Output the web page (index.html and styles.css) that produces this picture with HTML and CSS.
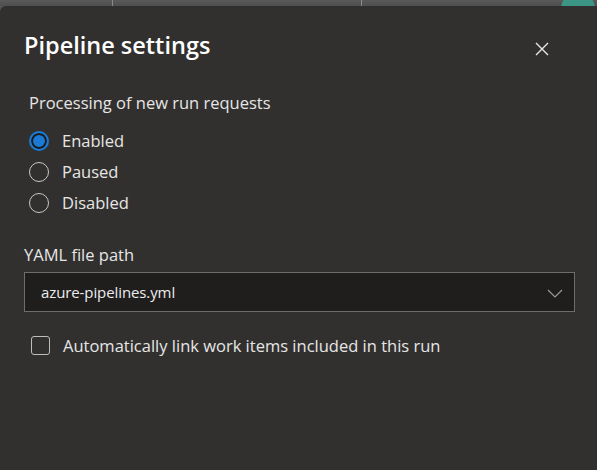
FILE: index.html
```html
<!DOCTYPE html>
<html>
<head>
<meta charset="utf-8">
<link rel="stylesheet" href="styles.css">
</head>
<body>
<div class="backdrop">
  <div class="topbar">
    <span class="divider d1"></span>
    <span class="divider d2"></span>
    <span class="avatar"></span>
  </div>
  <div class="panel">
    <div class="header">
      <h1 class="title">Pipeline settings</h1>
      <button class="close" aria-label="Close">
        <svg width="14" height="14" viewBox="0 0 14 14"><path d="M1 1 L13 13 M13 1 L1 13" stroke="#e8e8e8" stroke-width="1.4" fill="none"/></svg>
      </button>
    </div>
    <div class="group">
      <div class="group-label">Processing of new run requests</div>
      <div class="radios">
        <label class="radio"><span class="dot checked"></span><span>Enabled</span></label>
        <label class="radio"><span class="dot"></span><span>Paused</span></label>
        <label class="radio"><span class="dot"></span><span>Disabled</span></label>
      </div>
    </div>
    <div class="field">
      <div class="field-label">YAML file path</div>
      <div class="select">
        <span>azure-pipelines.yml</span>
        <svg class="chev" width="16" height="9" viewBox="0 0 16 9"><path d="M1 1 L8 8 L15 1" stroke="#9a9a9a" stroke-width="1.2" fill="none"/></svg>
      </div>
    </div>
    <label class="check"><span class="box"></span><span>Automatically link work items included in this run</span></label>
  </div>
</div>
</body>
</html>
```
FILE: styles.css
```css
* { box-sizing: border-box; }
html, body { margin: 0; padding: 0; }
body {
  width: 597px;
  height: 470px;
  overflow: hidden;
  background: #32302e;
  font-family: "Open Sans", "Noto Sans", sans-serif;
  color: #e6e6e6;
}
.backdrop {
  position: relative;
  height: 470px;
  display: flex;
  flex-direction: column;
  background: #555;
}
.topbar {
  height: 6px;
  background: linear-gradient(#5a5a5a, #4e4e4e);
  position: relative;
  overflow: hidden;
  flex: none;
}
.divider {
  position: absolute;
  top: 0;
  width: 1px;
  height: 6px;
  background: #8a8a8a;
}
.d1 { left: 112px; }
.d2 { left: 361px; }
.avatar {
  position: absolute;
  left: 561px;
  top: -8px;
  width: 34px;
  height: 34px;
  border-radius: 50%;
  background: #3c9686;
  z-index: 2;
}
.panel {
  flex: 1;
  background: #32302e;
  border-top-left-radius: 6px;
  padding: 0 22px 0 24px;
  position: relative;
}
.header {
  display: flex;
  justify-content: space-between;
  align-items: center;
  height: 80px;
  padding-bottom: 2px;
}
.title {
  margin: 0;
  font-size: 23.5px;
  font-weight: 600;
  color: #ffffff;
}
.close {
  background: none;
  border: none;
  padding: 0;
  width: 32px;
  height: 32px;
  display: flex;
  align-items: center;
  justify-content: center;
  margin-top: 8px;
  margin-right: 17px;
}
.group { padding-left: 5px; }
.group-label {
  font-size: 16.5px;
  line-height: 20px;
  margin-top: 7px;
}
.radios {
  display: flex;
  flex-direction: column;
  margin-top: 12px;
}
.radio {
  display: flex;
  align-items: center;
  height: 31px;
  font-size: 16.5px;
  gap: 13px;
}
.dot {
  width: 20px;
  height: 20px;
  border-radius: 50%;
  border: 1.5px solid #c8c8c8;
  flex: none;
}
.dot.checked {
  border: 2px solid #1a7ad4;
  background: #1a7ad4;
  box-shadow: inset 0 0 0 2px #1b1a19;
}
.field { margin-top: 27px; }
.field-label {
  font-size: 16.5px;
  line-height: 20px;
}
.select {
  margin-top: 7px;
  height: 40px;
  border: 1px solid #6e6d6b;
  background: #1f1e1d;
  display: flex;
  align-items: center;
  justify-content: space-between;
  padding: 0 11px 0 16px;
  font-size: 15px;
  letter-spacing: -0.1px;
  color: #ececec;
}
.chev { margin-top: 2px; }
.check {
  display: flex;
  align-items: center;
  gap: 13px;
  margin-top: 22px;
  padding-left: 7px;
  font-size: 16.5px;
}
.box {
  width: 19px;
  height: 19px;
  border: 1px solid #bdbdbd;
  border-radius: 3px;
  flex: none;
}
```
